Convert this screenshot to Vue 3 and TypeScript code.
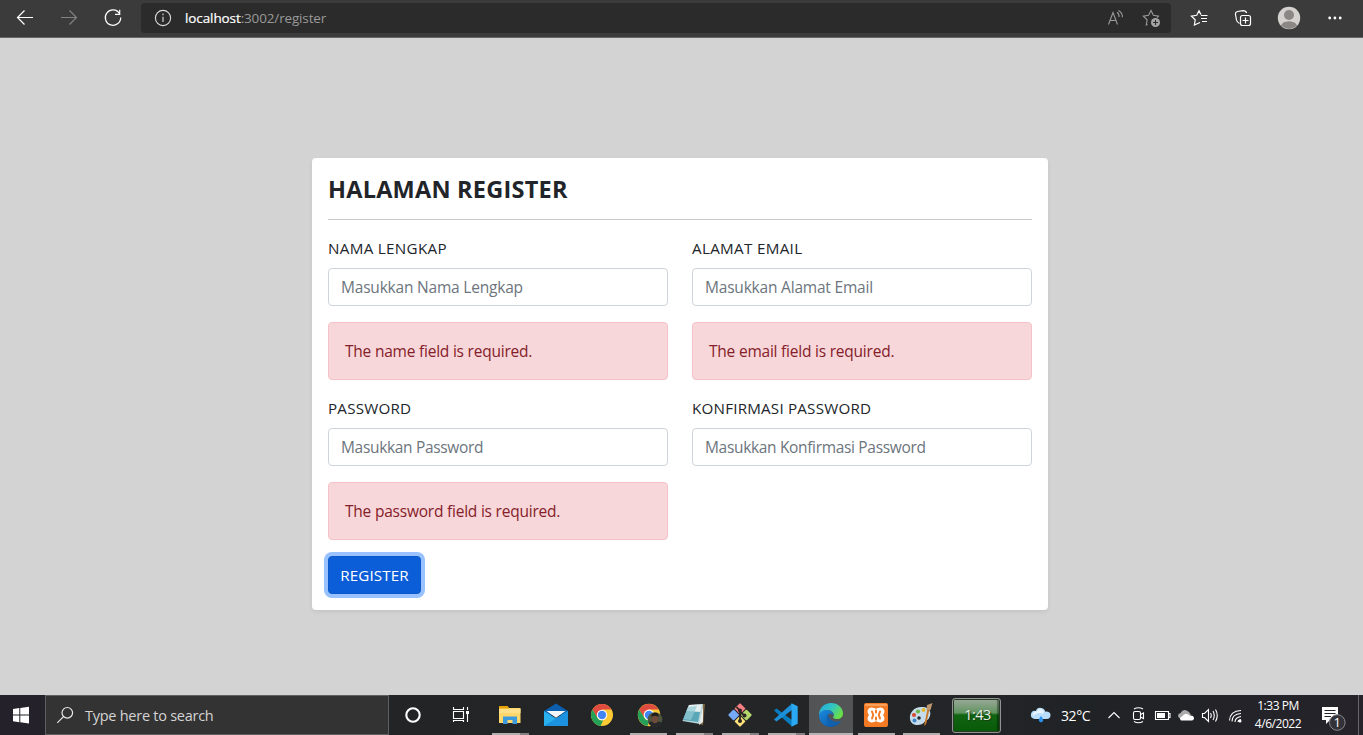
<script setup lang="ts">
import { ref } from 'vue'

interface Field {
  id: string
  label: string
  placeholder: string
  type: string
  error?: string
}

const fields: Field[] = [
  { id: 'name', label: 'NAMA LENGKAP', placeholder: 'Masukkan Nama Lengkap', type: 'text', error: 'The name field is required.' },
  { id: 'email', label: 'ALAMAT EMAIL', placeholder: 'Masukkan Alamat Email', type: 'email', error: 'The email field is required.' },
  { id: 'password', label: 'PASSWORD', placeholder: 'Masukkan Password', type: 'password', error: 'The password field is required.' },
  { id: 'confirm', label: 'KONFIRMASI PASSWORD', placeholder: 'Masukkan Konfirmasi Password', type: 'password' },
]

const values = ref<Record<string, string>>({ name: '', email: '', password: '', confirm: '' })
</script>

<template>
  <div class="screen">
    <header class="toolbar">
      <nav class="nav">
        <svg viewBox="15 8 20 20"><path d="M33 17.5H17.5M24.500 10.500L17.500 17.500L24.500 24.500" /></svg>
        <svg class="dim" viewBox="59 8 20 20"><path d="M61 17.500H76.500M69.500 10.500L76.500 17.500L69.500 24.500" /></svg>
        <svg viewBox="103 8 20 20"><path d="M119.500 13.500A7.700 7.700 0 1 0 120.700 17.500M119.700 9.800V14.300H115" /></svg>
      </nav>
      <div class="address">
        <svg class="info" viewBox="153 8 20 20"><circle cx="163" cy="18" r="7.600" /><path class="info-i" d="M163 16.800V22M163 13.600V15.200" /></svg>
        <span class="url"><span class="host">localhost</span><span class="path">:3002/register</span></span>
        <svg class="read" viewBox="1105 8 20 20"><path d="M1108.500 24.500L1113 12.500L1117.500 24.500M1110 20.500H1116M1117 12.200Q1119.400 13.800 1119 17M1118.500 10.500Q1122.800 13 1122.300 17.200" /></svg>
        <svg class="addstar" viewBox="1141 8 20 20"><path d="M1147.500 24.300L1146.300 25L1147.100 19.800L1143.300 16.100L1148.600 15.300L1151 10.500L1153.400 15.300L1158.500 16.100L1157 17.600" /><circle cx="1155.500" cy="22.500" r="4.500" /><path class="plus" d="M1153 22.500H1158M1155.500 20V25" /></svg>
      </div>
      <div class="actions">
        <svg viewBox="1189 8 20 20"><path d="M1200 22.500L1194.400 25L1195.200 19.800L1191.400 16.100L1196.700 15.300L1199 10.800L1201 14.600M1201 15.500H1207.500M1201 18.500H1207M1202 21.500H1207" /></svg>
        <svg viewBox="1233 8 20 20"><path d="M1239.500 23.500Q1237 22.500 1236.500 20L1235.400 14Q1235.400 12 1237.500 11.500L1243 10.600Q1246 10.600 1246.600 13" /><rect x="1240.500" y="15.500" width="10" height="10" rx="2" /><path d="M1242.500 20.500H1248.500M1245.500 17.500V23.500" /></svg>
        <svg class="avatar" viewBox="1277 6 24 24"><circle cx="1289" cy="18" r="11.200" fill="#d4d2cf" /><circle cx="1289" cy="15" r="5" fill="#8b8784" /><path d="M1281 25.800Q1282 21.500 1289 21.200Q1296 21.500 1297 25.800Q1289 32 1281 25.800" fill="#8b8784" /></svg>
        <svg class="dots" viewBox="1325 8 20 20"><circle cx="1329.700" cy="18" r="1.400" /><circle cx="1334.900" cy="18" r="1.400" /><circle cx="1340.200" cy="18" r="1.400" /></svg>
      </div>
    </header>

    <main class="page">
      <form class="card" @submit.prevent>
        <h1 class="title">HALAMAN REGISTER</h1>
        <hr class="rule">
        <div class="grid">
          <div v-for="f in fields" :key="f.id" class="field">
            <label :for="f.id" class="label" :class="'label-' + f.id">{{ f.label }}</label>
            <input :id="f.id" v-model="values[f.id]" class="input" :class="'input-' + f.id" :type="f.type" :placeholder="f.placeholder">
            <div v-if="f.error" class="alert">{{ f.error }}</div>
          </div>
        </div>
        <button class="submit" type="submit">REGISTER</button>
      </form>
    </main>

    <footer class="taskbar">
      <div class="start">
        <svg viewBox="12 706 18 18"><path d="M13 709L19.300 708V714.600H13ZM20.300 707.900L29 706.800V714.600H20.300ZM13 715.600H19.300V722.200L13 721.300ZM20.300 715.600H29V723.500L20.300 722.300Z" /></svg>
      </div>
      <div class="search">
        <svg viewBox="55 704 22 22"><circle cx="67.300" cy="712.800" r="5.300" /><path d="M63.500 716.600L57.300 722.800" /></svg>
        <span>Type here to search</span>
      </div>
      <div class="slot cortana"><svg viewBox="401 703 24 24"><circle cx="413" cy="715" r="6.700" fill="none" stroke="#fff" stroke-width="2.100" /></svg></div>
      <div class="slot views"><svg viewBox="449 703 24 24"><path d="M453.500 707V709.500H463.500V707M453.500 711.500H463.500V718.500H453.500ZM453.500 722V720.500H463.500V722M467.500 707V710M467.500 714V722" fill="none" stroke="#fff" stroke-width="1.100" /><rect x="466" y="711" width="3" height="3" fill="#fff" /></svg></div>
      <div class="slot multi">
        <svg viewBox="498 703 24 24"><path d="M499 706.500Q499 706 500 706H507L509 708H520.500V723H499Z" fill="#ffd76a" /><path d="M499 706H507.500L509 708.500H499Z" fill="#e4a100" /><path d="M499 709H520.500V713H499Z" fill="#ffe08a" /><path d="M503 724V716.500H517V724H512.500V720H507.500V724Z" fill="#3d9bdd" /></svg>
      </div>
      <div class="slot">
        <svg viewBox="544 703 24 24"><path d="M544 711L556 703.500L568 711V715H544Z" fill="#0b5fae" /><path d="M544 711L556 718.500L568 711V726H544Z" fill="#29b1ef" /><path d="M568 711V726H544Z" fill="#1b91df" /><path d="M546.500 711H565.500L556 717.800Z" fill="#f4f7fa" /></svg>
      </div>
      <div class="slot">
        <svg viewBox="0 0 24 24"><circle cx="12" cy="12" r="11" fill="#fbc934" /><path d="M2.500 6.500A11 11 0 0 1 21.500 6.500H12L7.200 14.700Z" fill="#df4b3f" /><path d="M2.500 6.500L7.300 14.700A5.500 5.500 0 0 0 13.300 17.300L10.500 22.900A11 11 0 0 1 2.500 6.500" fill="#24a058" /><circle cx="12" cy="12" r="5.200" fill="#fff" /><circle cx="12" cy="12" r="4.200" fill="#4285f4" /></svg>
      </div>
      <div class="slot single profile">
        <svg viewBox="0 0 26 24"><circle cx="12" cy="12" r="11.200" fill="#fbc934" /><path d="M2.300 6.500A11.200 11.200 0 0 1 21.700 6.500H12L7.300 14.700Z" fill="#df4b3f" /><path d="M2.300 6.500L7.300 14.700A5.500 5.500 0 0 0 13 17.300L10.300 23A11.200 11.200 0 0 1 2.300 6.500" fill="#24a058" /><circle cx="12" cy="12" r="5.400" fill="#fff" /><circle cx="12" cy="12" r="4.200" fill="#4285f4" /><circle cx="18" cy="16.500" r="7.300" fill="#4e5540" /><path d="M11.300 19.500Q14 18 18 18.500Q22 18 24.700 19.500A7.300 7.300 0 0 1 11.300 19.500" fill="#25272a" /><ellipse cx="18" cy="15.500" rx="3.300" ry="4.800" fill="#6e4b3b" /><path d="M14.500 14Q14 9.800 18 9.800T21.500 14Q18 11.500 14.500 14" fill="#211f1c" /></svg>
      </div>
      <div class="slot multi">
        <svg viewBox="682 703 24 24"><path d="M689 705L705 704L703 725L699 724Z" fill="#7d6640" /><path d="M689 705L703 704L700 724L682.500 721Z" fill="#b7d6dc" /><path d="M689 705L702 704.500L700 712L686.500 711Z" fill="#e5eff0" /><path d="M686.500 711L700 712L698 722L683 720Z" fill="#5aa7b7" /><path d="M688 707L697 706L691 720L683.500 719Z" fill="#92cbd3" opacity=".7" /><path d="M703 705L699 725L703 722Z" fill="#e8edeb" /></svg>
      </div>
      <div class="slot multi">
        <svg viewBox="0 0 24 24"><g transform="rotate(45 12 12)"><rect x="3.500" y="3.500" width="8" height="8" rx="1" fill="#f77f82" /><rect x="12.500" y="3.500" width="8" height="8" rx="1" fill="#b6d66c" /><rect x="3.500" y="12.500" width="8" height="8" rx="1" fill="#76a9f7" /><rect x="12.500" y="12.500" width="8" height="8" rx="1" fill="#ffe179" /></g><path d="M8.500 4L12 8V19M12 9L16.500 12.500" fill="none" stroke="#2b2523" stroke-width="1.800" /><circle cx="12" cy="7.500" r="2" fill="#2b2523" /><circle cx="12" cy="18" r="2" fill="#2b2523" /><circle cx="16.500" cy="12.500" r="2" fill="#2b2523" /></svg>
      </div>
      <div class="slot multi">
        <svg viewBox="0 0 24 24"><path d="M0 7.500L2.500 5.500L18 17V23.500Z" fill="#087cc1" /><path d="M0 16.500L2.500 18.500L18 7V.5Z" fill="#1c91da" /><path d="M17.500.3L23.700 3.300V20.700L17.500 23.700Z" fill="#2aa9f2" /></svg>
      </div>
      <div class="slot active">
        <svg viewBox="0 0 24 24">
          <defs>
            <linearGradient id="edge-top" x1="0" y1="0" x2="1" y2=".5"><stop offset="0" stop-color="#24a7df" /><stop offset=".55" stop-color="#31c5c2" /><stop offset="1" stop-color="#69df49" /></linearGradient>
            <linearGradient id="edge-low" x1="0" y1="0" x2="1" y2="1"><stop offset="0" stop-color="#1a8de0" /><stop offset="1" stop-color="#0c4c9a" /></linearGradient>
          </defs>
          <path d="M0 12C0 5 5 0 12 0C19 0 24 5 24 10.500C24 14 21.500 16 18 16C15 16 13.500 15 14.500 13.500C16 11 13 7 8.500 7C4 7 1 9.500 0 12" fill="url(#edge-top)" />
          <path d="M0 12C1 8.500 5 6.500 8.500 7C12 7.300 14.500 10 14.300 12.500C12 9 8 11 8 15C8 20 14 22.500 22 18C18 24 12 24.500 9 23.800C4 22.500 0 18 0 12" fill="url(#edge-low)" />
          <path d="M8.800 11.500C6 16 9 22 14 22.500C17 22.500 20 20.500 22 18C17 20 10.500 18 8.800 11.500" fill="#1361ad" />
        </svg>
      </div>
      <div class="slot single">
        <svg viewBox="0 0 24 24"><rect width="24" height="24" rx="2" fill="#f47b24" /><rect x="1" y="1" width="22" height="2" rx="1" fill="#f9a15b" /><path d="M12 7C10.500 5.700 9.500 5.500 7.500 5.500C4.500 5.500 4 8.300 4.700 9.800L6 12L4.700 14.200C4 15.700 4.500 18.500 7.500 18.500C9.500 18.500 10.500 18.300 12 17C13.500 18.300 14.500 18.500 16.500 18.500C19.500 18.500 20 15.700 19.300 14.200L18 12L19.300 9.800C20 8.300 19.500 5.500 16.500 5.500C14.500 5.500 13.500 5.700 12 7Z" fill="#fff" stroke="#fff" stroke-width="1.800" stroke-linejoin="round" /><path d="M8 8.500L9.200 12L8 15.500M16 8.500L14.800 12L16 15.500M12 7.500V9.500M12 14.500V16.500" fill="none" stroke="#f47b24" stroke-width="2" stroke-linecap="round" stroke-linejoin="round" /></svg>
      </div>
      <div class="slot single paint">
        <svg viewBox="0 0 24 24"><path d="M1 16C0 9 6 3 14 4C20 4.500 23 9 20.500 14C19 18 17 17 15.500 19C13 23 2 24 1 16Z" fill="#c5dcec" /><circle cx="5" cy="12" r="2.100" fill="#d94a35" /><circle cx="9" cy="8.500" r="2.100" fill="#70b64a" /><circle cx="14.500" cy="7" r="2" fill="#e3b92f" /><circle cx="10" cy="15" r="1.800" fill="#272b2f" /><circle cx="5.500" cy="17.500" r="2" fill="#4186c9" /><path d="M15 23L18.300 6.500L20.300 7L17.200 21Z" fill="#c87828" /><path d="M17.500 7L18 2L23.500 0L21.500 7Z" fill="#bb966f" /></svg>
      </div>
      <div class="timer"><span>1:43</span></div>

      <div class="tray">
        <svg class="weather" viewBox="1030 705 22 20"><path d="M1034.500 719Q1030 718 1031 714T1036 711Q1037 707 1041.500 708Q1045 709 1045 711.500Q1050.500 711 1050.500 715T1046.500 719Z" fill="#b8defa" /><path d="M1037 711Q1039 708 1042 709.500T1043 714Q1038 711 1033 716Q1032 712 1037 711" fill="#e8f5ff" /><path d="M1041 716Q1045.500 721 1041 722.500Q1036.500 721 1041 716" fill="#2b91eb" /></svg>
        <span class="temp">32°C</span>
        <svg class="chev" viewBox="1107 709 14 12"><path d="M1108.500 718L1114 712.500L1119.500 718" /></svg>
        <svg class="meet" viewBox="1131 706 16 19"><rect x="1133.500" y="711.500" width="7" height="8" rx="1.500" /><path d="M1140.500 714.500L1143.500 713V718.500L1140.500 717M1134 709Q1138.500 706.500 1143 709M1134 721.500Q1138.500 724 1143 721.500" /></svg>
        <svg class="battery" viewBox="1154 709 17 13"><path d="M1155.500 711.500H1168.500V719.500H1155.500ZM1168.500 713.500H1170V717.500H1168.500" /><rect x="1157" y="713" width="8" height="5" fill="#fff" stroke="none" /></svg>
        <svg class="cloud" viewBox="1177 709 18 13"><path d="M1179 718Q1176.500 714 1180.500 713Q1183.500 707.500 1189 712L1191 715L1184 719Z" fill="#aaa" /><path d="M1181 720.500Q1178.500 718 1182 716.500Q1185.500 711.500 1189.500 715.500Q1194 715 1194 718.500Q1193.500 720.500 1192 720.500Z" fill="#fff" /></svg>
        <svg class="sound" viewBox="1201 707 18 17"><path d="M1202.500 713.500H1204.500L1208.500 709.500V721.500L1204.500 717.500H1202.500ZM1210.500 713Q1212 715.500 1210.500 718M1213 711Q1215.500 715.500 1213 720M1215.500 709.500Q1219 715.500 1215.500 721.500" /></svg>
        <svg class="wifi" viewBox="1228 708 15 15"><path d="M1229.500 720.500Q1230 711 1241 710.500M1232 721.500Q1232 714 1241 713.500M1235 722Q1235 717.500 1241 716.500M1238 722Q1238 720 1241 719.500" /><circle cx="1240" cy="721" r="1.500" fill="#fff" stroke="none" /></svg>
        <div class="clock"><span>1:33 PM</span><span>4/6/2022</span></div>
        <svg class="notice" viewBox="1320 704 28 28"><path d="M1322 707H1338V720H1330L1326 724V720H1322Z" fill="#fff" /><path d="M1324.500 710.500H1335.500M1324.500 713.500H1335.500M1324.500 716.500H1331" stroke="#242329" stroke-width="1.200" /><circle cx="1337.300" cy="722.500" r="7.800" fill="#333238" stroke="#898a90" stroke-width="1" /><text x="1337.300" y="727">1</text></svg>
      </div>
    </footer>
  </div>
</template>

<style>
body { margin: 0; overflow: hidden; }
</style>

<style scoped>
* { box-sizing: border-box; }
.screen { display: flex; flex-direction: column; width: 1363px; height: 735px; background: #d3d3d3; font-family: "Open Sans", "Noto Sans", sans-serif; }
svg { display: block; flex: none; }

.toolbar { display: flex; height: 38px; padding: 3px 18px 0 15px; background: #3b3b3b; border-bottom: 1px solid #666; }
.nav, .actions { display: flex; align-items: center; gap: 24px; height: 30px; }
.nav svg, .actions svg { width: 20px; height: 20px; fill: none; stroke: #fff; stroke-width: 1.200; }
.nav .dim { stroke: #828282; }
.address { display: flex; align-items: center; width: 1030px; height: 30px; margin-left: 18px; padding: 0 10px 0 12px; background: #2b2b2b; border-radius: 4px; }
.address svg { width: 20px; height: 20px; fill: none; stroke: #9a9a9a; stroke-width: 1.100; }
.address .info { stroke: #ddd; }
.address .info-i { stroke: #aaa; stroke-width: 1.600; }
.url { flex: 1; margin-left: 12px; font-size: 13.500px; line-height: 20px; }
.host { color: #fff; letter-spacing: -.1px; -webkit-text-stroke: .2px #fff; }
.path { color: #999; letter-spacing: -.15px; }
.read { margin-right: 16px; }
.addstar circle { fill: #a5a5a5; stroke: none; }
.address .addstar .plus { stroke: #2b2b2b; }
.actions { margin-left: 18px; }
.actions .avatar { width: 24px; height: 24px; stroke: none; }
.actions .dots { fill: #fff; stroke: none; }

.page { display: flex; justify-content: center; align-items: flex-start; height: 657px; padding: 120px 3px 0 0; }
.card { width: 736px; height: 452px; padding: 16px; background: #fff; border-radius: 4px; box-shadow: 0 2px 4px rgba(0, 0, 0, .075); color: #212529; }
.title { height: 29px; margin: 0; font-size: 23.500px; line-height: 30px; font-weight: 700; letter-spacing: .23px; }
.rule { height: 1px; margin: 16px 0; border: 0; background: #c7c8c9; }
.grid { display: grid; grid-template-columns: 340px 340px; gap: 16px 24px; }
.field { display: flex; flex-direction: column; }
.label { height: 24px; margin-bottom: 8px; font-size: 15.200px; line-height: 25px; letter-spacing: .2px; }
.label-name, .label-email { letter-spacing: .32px; }
.input { width: 100%; height: 38px; padding: 6px 12px; border: 1px solid #ced4da; border-radius: 4px; outline: 0; background: #fff; color: #212529; font-family: inherit; font-size: 15.500px; line-height: 24px; letter-spacing: -.2px; }
.input-password, .input-confirm { letter-spacing: -.33px; }
.input::placeholder { color: #6c757d; opacity: 1; }
.alert { height: 58px; margin-top: 16px; padding: 16px; border: 1px solid #f5c2c7; border-radius: 4px; background: #f8d7da; color: #842029; font-size: 15.500px; line-height: 25px; letter-spacing: -.22px; }
.submit { display: block; width: 93px; height: 38px; margin: 16px 0 0; padding: 0; border: 1px solid #0a58ca; border-radius: 4px; background: #0b5ed7; box-shadow: 0 0 0 4px #98c1fe; color: #fff; font-family: inherit; font-size: 15.200px; line-height: 36px; letter-spacing: .1px; }

.taskbar { display: flex; height: 40px; background: linear-gradient(90deg, #24212a 0, #222426 29%, #242527 65%, #202326 80%, #26232b 100%); color: #fff; }
.taskbar > * { flex: none; }
.start { display: flex; align-items: center; width: 45px; padding-left: 12px; }
.start svg { width: 18px; height: 18px; fill: #fff; }
.search { display: flex; align-items: center; width: 344px; padding-left: 9px; border: 1px solid #5f5f5f; background: #333; color: #d4d4d4; font-size: 14.500px; letter-spacing: -.26px; }
.search svg { width: 22px; height: 22px; margin-right: 8px; fill: none; stroke: #e8e8e8; stroke-width: 1.200; }
.slot { display: flex; position: relative; justify-content: center; width: 46px; height: 40px; padding-top: 8px; }
.slot svg { width: 24px; height: 24px; }
.cortana { margin-left: 1px; }
.views { width: 48px; margin-left: 1px; margin-right: 2px; }
.slot.single::after, .slot.multi::after { content: ""; position: absolute; bottom: 0; left: 5px; width: 37px; height: 2px; background: #b2aeae; }
.slot.multi::after { background: linear-gradient(90deg, #b2aeae 28px, #858183 28px); }
.slot.profile { padding-left: 3px; }
.slot.profile svg { width: 26px; }
.slot.active { width: 44px; background: #535456; border-bottom: 2px solid #b5b3b3; }
.slot.paint { width: 44px; }
.slot.paint::after { left: 4px; }
.timer { display: flex; align-items: center; justify-content: center; width: 49px; height: 35px; margin: 3px 0 0 9px; padding-left: 2px; border: 1px solid #929494; border-radius: 3px; background: linear-gradient(#9ba99a 0, #609460 42%, #126512 48%, #075907 100%); box-shadow: inset 0 0 0 1px #263c25, inset -3px 0 1px rgba(0, 0, 0, .35); color: #e8eee8; font-size: 14.500px; letter-spacing: -.6px; text-shadow: 1px 1px 1px #143814; }
.timer span { padding-bottom: 2px; }
.tray { display: flex; align-items: center; width: 358px; padding-left: 29px; border-right: 1px solid #68666c; }
.tray > * { flex: none; }
.weather { width: 22px; height: 20px; }
.temp { width: 46px; padding-left: 9px; font-size: 14px; letter-spacing: -.4px; }
.chev, .meet, .battery, .sound, .wifi { fill: none; stroke: #fff; stroke-width: 1.100; }
.chev { width: 14px; height: 12px; margin-left: 9px; }
.meet { width: 16px; height: 19px; margin-left: 10px; }
.battery { width: 17px; height: 13px; margin-left: 7px; }
.cloud { width: 18px; height: 13px; margin-left: 6px; }
.sound { width: 18px; height: 17px; margin-left: 6px; }
.wifi { width: 15px; height: 15px; margin-left: 9px; }
.clock { display: flex; flex-direction: column; align-items: center; width: 60px; margin-left: 5px; font-size: 12px; line-height: 18px; letter-spacing: -.45px; }
.notice { width: 28px; height: 28px; margin: 6px 0 0 12px; }
.notice text { fill: #fff; font-size: 13px; text-anchor: middle; }
</style>
